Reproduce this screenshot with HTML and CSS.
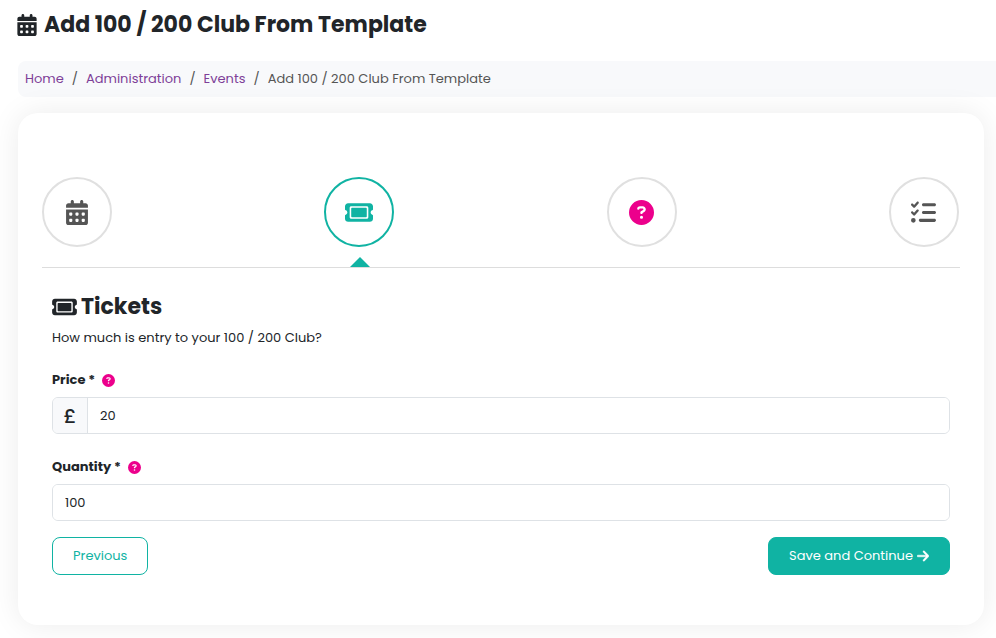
FILE: index.html
```html
<!DOCTYPE html>
<html lang="en">
<head>
<meta charset="utf-8">
<meta name="viewport" content="width=device-width, initial-scale=1">
<title>Add 100 / 200 Club From Template</title>
<link rel="stylesheet" href="styles.css">
</head>
<body>
<svg class="sprite" aria-hidden="true">
  <symbol id="calendar" viewBox="0 0 448 512"><path d="M128 0c17.700 0 32 14.300 32 32V64H288V32c0-17.700 14.300-32 32-32s32 14.300 32 32V64h48c26.500 0 48 21.500 48 48v48H0V112C0 85.500 21.500 64 48 64H96V32c0-17.700 14.300-32 32-32zM0 192H448V464c0 26.500-21.500 48-48 48H48c-26.500 0-48-21.500-48-48V192zm64 80v32c0 8.800 7.200 16 16 16h32c8.800 0 16-7.200 16-16V272c0-8.800-7.200-16-16-16H80c-8.800 0-16 7.200-16 16zm128 0v32c0 8.800 7.200 16 16 16h32c8.800 0 16-7.200 16-16V272c0-8.800-7.200-16-16-16H208c-8.800 0-16 7.200-16 16zm144-16c-8.800 0-16 7.200-16 16v32c0 8.800 7.200 16 16 16h32c8.800 0 16-7.200 16-16V272c0-8.800-7.200-16-16-16H336zM64 400v32c0 8.800 7.200 16 16 16h32c8.800 0 16-7.200 16-16V400c0-8.800-7.200-16-16-16H80c-8.800 0-16 7.200-16 16zm144-16c-8.800 0-16 7.200-16 16v32c0 8.800 7.200 16 16 16h32c8.800 0 16-7.200 16-16V400c0-8.800-7.200-16-16-16H208zm112 16v32c0 8.800 7.200 16 16 16h32c8.800 0 16-7.200 16-16V400c0-8.800-7.200-16-16-16H336c-8.800 0-16 7.200-16 16z" fill-rule="evenodd"/></symbol>
  <symbol id="ticket" viewBox="0 0 576 512"><path fill-rule="evenodd" d="M64 64C28.700 64 0 92.700 0 128v64c0 8.800 7.400 15.700 15.700 18.600C34.500 217.100 48 235 48 256s-13.500 38.900-32.300 45.400C7.400 304.300 0 311.200 0 320v64c0 35.300 28.700 64 64 64H512c35.300 0 64-28.700 64-64V320c0-8.800-7.400-15.700-15.700-18.600C541.500 294.900 528 277 528 256s13.500-38.900 32.300-45.400c8.300-2.900 15.700-9.800 15.700-18.600V128c0-35.300-28.700-64-64-64H64zm64 112l0 160c0 8.800 7.200 16 16 16H432c8.800 0 16-7.200 16-16V176c0-8.800-7.200-16-16-16H144c-8.800 0-16 7.200-16 16zM96 160c0-17.700 14.300-32 32-32H448c17.700 0 32 14.300 32 32V352c0 17.700-14.300 32-32 32H128c-17.700 0-32-14.300-32-32V160z"/></symbol>
  <symbol id="question" viewBox="0 0 512 512"><path fill-rule="evenodd" d="M256 512A256 256 0 1 0 256 0a256 256 0 1 0 0 512zM169.800 165.300c7.900-22.300 29.100-37.300 52.800-37.300h58.300c34.900 0 63.100 28.300 63.100 63.100c0 22.600-12.100 43.500-31.700 54.800L280 264.400c-.2 13-10.900 23.600-24 23.600c-13.300 0-24-10.700-24-24V250.500c0-8.600 4.600-16.500 12.100-20.800l44.300-25.400c4.700-2.700 7.600-7.700 7.600-13.100c0-8.400-6.800-15.100-15.100-15.100H222.600c-3.400 0-6.400 2.100-7.500 5.300l-.4 1.200c-4.400 12.500-18.200 19-30.600 14.600s-19-18.200-14.600-30.600l.3-1.200zM224 352a32 32 0 1 1 64 0 32 32 0 1 1 -64 0z"/></symbol>
  <symbol id="checklist" viewBox="0 0 512 512"><path d="M152.100 38.200c9.900 8.900 10.700 24 1.800 33.900l-72 80c-4.400 4.900-10.600 7.800-17.200 7.900s-12.900-2.400-17.600-7L7 113C-2.300 103.600-2.300 88.400 7 79s24.600-9.400 33.900 0l22.100 22.100 55.100-61.200c8.900-9.900 24-10.700 33.900-1.800zm0 160c9.900 8.900 10.700 24 1.800 33.900l-72 80c-4.400 4.900-10.600 7.800-17.200 7.900s-12.900-2.400-17.600-7L7 273c-9.400-9.400-9.400-24.600 0-33.900s24.600-9.400 33.900 0l22.100 22.100 55.100-61.200c8.900-9.900 24-10.700 33.900-1.800zM224 96c0-17.700 14.300-32 32-32H480c17.700 0 32 14.300 32 32s-14.300 32-32 32H256c-17.700 0-32-14.300-32-32zm0 160c0-17.700 14.300-32 32-32H480c17.700 0 32 14.300 32 32s-14.300 32-32 32H256c-17.700 0-32-14.300-32-32zM160 416c0-17.700 14.300-32 32-32H480c17.700 0 32 14.300 32 32s-14.300 32-32 32H192c-17.700 0-32-14.300-32-32zM48 368a48 48 0 1 1 0 96 48 48 0 1 1 0-96z"/></symbol>
  <symbol id="arrow" viewBox="0 0 448 512"><path d="M438.600 278.600c12.500-12.500 12.500-32.800 0-45.300l-160-160c-12.500-12.500-32.800-12.500-45.300 0s-12.500 32.800 0 45.300L338.800 224 32 224c-17.700 0-32 14.300-32 32s14.300 32 32 32l306.700 0L233.400 393.400c-12.500 12.500-12.500 32.800 0 45.300s32.800 12.500 45.300 0l160-160z"/></symbol>
</svg>
<div class="page">
  <header class="page-title">
    <svg class="icon title-icon"><use href="#calendar"/></svg>
    <h1>Add 100 / 200 Club From Template</h1>
  </header>
  <nav class="breadcrumb" aria-label="Breadcrumb">
    <ol>
      <li><a href="#home">Home</a></li>
      <li><a href="#administration">Administration</a></li>
      <li><a href="#events">Events</a></li>
      <li aria-current="page">Add 100 / 200 Club From Template</li>
    </ol>
  </nav>
  <main class="card">
    <ol class="steps">
      <li><a class="step" href="#details" aria-label="Details"><svg class="icon step-calendar"><use href="#calendar"/></svg></a></li>
      <li class="current"><a class="step" href="#tickets" aria-label="Tickets" aria-current="step"><svg class="icon step-ticket"><use href="#ticket"/></svg></a></li>
      <li><a class="step" href="#questions" aria-label="Questions"><svg class="icon step-question"><use href="#question"/></svg></a></li>
      <li><a class="step" href="#summary" aria-label="Summary"><svg class="icon step-checklist"><use href="#checklist"/></svg></a></li>
    </ol>
    <form class="form">
      <div class="section-title">
        <svg class="icon section-icon"><use href="#ticket"/></svg>
        <h2>Tickets</h2>
      </div>
      <p class="intro">How much is entry to your 100 / 200 Club?</p>
      <div class="field">
        <div class="label-row">
          <label for="price">Price *</label>
          <button class="help" type="button" aria-label="Help with price"><svg class="icon"><use href="#question"/></svg></button>
        </div>
        <div class="input-group">
          <span class="prefix">£</span>
          <input id="price" type="text" inputmode="decimal" value="20">
        </div>
      </div>
      <div class="field">
        <div class="label-row">
          <label for="quantity">Quantity *</label>
          <button class="help" type="button" aria-label="Help with quantity"><svg class="icon"><use href="#question"/></svg></button>
        </div>
        <div class="input-group">
          <input id="quantity" type="text" inputmode="numeric" value="100">
        </div>
      </div>
      <div class="actions">
        <button class="btn btn-outline" type="button">Previous</button>
        <button class="btn btn-primary" type="submit">Save and Continue <svg class="icon arrow"><use href="#arrow"/></svg></button>
      </div>
    </form>
  </main>
</div>
</body>
</html>
```
FILE: styles.css
```css
:root {
  --teal: #10b3a3;
  --pink: #ec008c;
  --ink: #212529;
  --grey: #555;
  --line: #dee2e6;
  --tint: #f8f9fb;
}

* { box-sizing: border-box; }

body {
  margin: 0;
  background: #fff;
  color: var(--ink);
  font-family: Poppins, Inter, sans-serif;
  font-size: 13px;
  line-height: 20px;
}

h1, h2, p, ol { margin: 0; padding: 0; }
ol { list-style: none; }

h1, h2 {
  font-size: 22px;
  line-height: 28px;
  font-weight: 700;
}

.sprite { display: none; }
.icon { display: block; fill: currentColor; flex: none; }

.page {
  padding: 11px 12px 13px 17px;
}

.page-title {
  display: flex;
  align-items: center;
  gap: 7px;
}
.title-icon { width: 20px; height: 22px; }

.breadcrumb {
  margin: 22px -12px 16px 1px;
  padding: 8px 7px;
  background: var(--tint);
  border-radius: 8px 0 0 8px;
  color: var(--grey);
}
.breadcrumb ol { display: flex; flex-wrap: wrap; }
.breadcrumb li + li::before {
  content: "/";
  padding: 0 8px;
}
.breadcrumb a { color: #7e3f98; text-decoration: none; }

.card {
  margin-left: 1px;
  padding: 64px 24px 50px;
  background: #fff;
  border-radius: 20px;
  box-shadow: 0 0 30px rgba(0, 0, 0, 0.08);
}

.steps {
  display: flex;
  justify-content: space-between;
  padding-right: 1px;
  border-bottom: 1px solid #ddd;
}
.steps li {
  position: relative;
  padding-bottom: 20px;
}
.steps .current::after {
  content: "";
  position: absolute;
  bottom: 0;
  left: 50%;
  margin-left: -9px;
  border: 10px solid transparent;
  border-top: 0;
  border-bottom-color: var(--teal);
}
.step {
  display: flex;
  align-items: center;
  justify-content: center;
  width: 70px;
  height: 70px;
  border: 2px solid #e0e0e0;
  border-radius: 50%;
  color: var(--grey);
}
.current .step { border-color: var(--teal); color: var(--teal); }
.step-calendar { width: 22px; height: 25px; }
.step-ticket { width: 28px; height: 25px; }
.step-question { width: 25px; height: 25px; color: var(--pink); }
.step-checklist { width: 25px; height: 25px; }

.form { padding: 25px 10px 0; }

.section-title {
  display: flex;
  align-items: center;
  gap: 4px;
}
.section-icon { width: 25px; height: 22px; }
.intro { margin: 7px 0 22px; }

.field { margin-bottom: 16px; }
.field + .field { margin-top: 23px; }
.label-row {
  display: flex;
  align-items: center;
  gap: 7px;
  margin-bottom: 7px;
}
label { font-weight: 700; }
.help {
  padding: 0;
  border: 0;
  background: none;
  color: var(--pink);
}
.help .icon { width: 13px; height: 13px; }

.input-group {
  display: flex;
  height: 37px;
  border: 1px solid var(--line);
  border-radius: 6px;
  overflow: hidden;
}
.prefix {
  display: flex;
  align-items: center;
  justify-content: center;
  width: 35px;
  background: var(--tint);
  border-right: 1px solid var(--line);
  font-size: 20px;
  font-weight: 500;
}
input {
  flex: 1;
  min-width: 0;
  padding: 0 12px;
  border: 0;
  background: #fff;
  color: var(--ink);
  font: inherit;
}

.actions {
  display: flex;
  justify-content: space-between;
}
.btn {
  display: flex;
  align-items: center;
  gap: 4px;
  height: 38px;
  padding: 0 20px;
  border: 1px solid var(--teal);
  border-radius: 8px;
  font: inherit;
}
.btn-outline { background: #fff; color: var(--teal); }
.btn-primary { background: var(--teal); color: #fff; }
.arrow { width: 12px; height: 14px; stroke: currentColor; stroke-width: 16px; }
```
